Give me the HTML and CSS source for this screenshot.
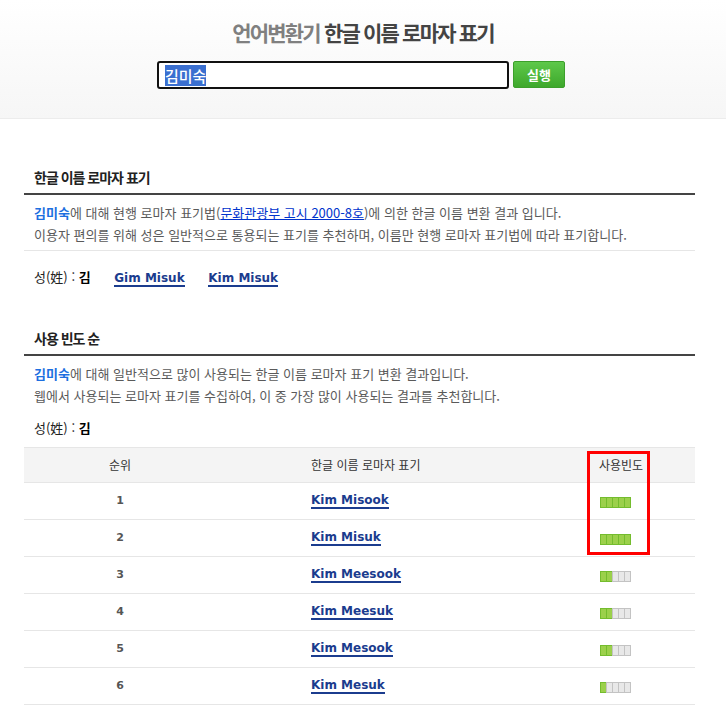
FILE: index.html
```html
<!DOCTYPE html>
<html lang="ko">
<head>
  <meta charset="UTF-8">
  <meta name="viewport" content="width=device-width, initial-scale=1.0">
  <title>한글 이름 로마자 표기</title>
  <link rel="stylesheet" href="styles.css">
  <script>
    // 검색어 선택 상태로 시작
    window.addEventListener('load', () => {
      const q = document.querySelector('#q');
      q.focus();
      q.select();
    });
  </script>
</head>
<body>
  <header class="top">
    <h1><span class="site">언어변환기</span> 한글 이름 로마자 표기</h1>
    <form class="search" onsubmit="return false">
      <input type="text" id="q" name="q" value="김미숙">
      <button type="submit">실행</button>
    </form>
  </header>

  <main class="content">
    <section class="section">
      <h2 class="section-title">한글 이름 로마자 표기</h2>
      <div class="desc desc-line">
        <p><strong class="name">김미숙</strong>에 대해 현행 로마자 표기법(<a href="#" class="law">문화관광부 고시 2000-8호</a>)에 의한 한글 이름 변환 결과 입니다.</p>
        <p>이용자 편의를 위해 성은 일반적으로 통용되는 표기를 추천하며, 이름만 현행 로마자 표기법에 따라 표기합니다.</p>
      </div>
      <p class="surname first">성(姓) : <b>김</b>
        <a href="#" class="roman">Gim Misuk</a>
        <a href="#" class="roman">Kim Misuk</a>
      </p>
    </section>

    <section class="section second">
      <h2 class="section-title">사용 빈도 순</h2>
      <div class="desc">
        <p><strong class="name">김미숙</strong>에 대해 일반적으로 많이 사용되는 한글 이름 로마자 표기 변환 결과입니다.</p>
        <p>웹에서 사용되는 로마자 표기를 수집하여, 이 중 가장 많이 사용되는 결과를 추천합니다.</p>
      </div>
      <p class="surname">성(姓) : <b>김</b></p>

      <div class="rank-wrap">
        <table class="rank">
          <thead>
            <tr>
              <th class="col-no">순위</th>
              <th class="col-name">한글 이름 로마자 표기</th>
              <th class="col-freq">사용빈도</th>
            </tr>
          </thead>
          <tbody>
            <tr>
              <td class="col-no">1</td>
              <td class="col-name"><a href="#" class="roman">Kim Misook</a></td>
              <td class="col-freq"><span class="bar"><i class="on"></i><i class="on"></i><i class="on"></i><i class="on"></i><i class="on"></i></span></td>
            </tr>
            <tr>
              <td class="col-no">2</td>
              <td class="col-name"><a href="#" class="roman">Kim Misuk</a></td>
              <td class="col-freq"><span class="bar"><i class="on"></i><i class="on"></i><i class="on"></i><i class="on"></i><i class="on"></i></span></td>
            </tr>
            <tr>
              <td class="col-no">3</td>
              <td class="col-name"><a href="#" class="roman">Kim Meesook</a></td>
              <td class="col-freq"><span class="bar"><i class="on"></i><i class="on"></i><i></i><i></i><i></i></span></td>
            </tr>
            <tr>
              <td class="col-no">4</td>
              <td class="col-name"><a href="#" class="roman">Kim Meesuk</a></td>
              <td class="col-freq"><span class="bar"><i class="on"></i><i class="on"></i><i></i><i></i><i></i></span></td>
            </tr>
            <tr>
              <td class="col-no">5</td>
              <td class="col-name"><a href="#" class="roman">Kim Mesook</a></td>
              <td class="col-freq"><span class="bar"><i class="on"></i><i class="on"></i><i></i><i></i><i></i></span></td>
            </tr>
            <tr>
              <td class="col-no">6</td>
              <td class="col-name"><a href="#" class="roman">Kim Mesuk</a></td>
              <td class="col-freq"><span class="bar"><i class="on"></i><i></i><i></i><i></i><i></i></span></td>
            </tr>
          </tbody>
        </table>
        <div class="mark"></div>
      </div>
    </section>
  </main>
</body>
</html>
```

FILE: styles.css
```css
html, body, h1, h2, p, form {
  padding: 0;
  margin: 0;
}

body {
  font-family: "Noto Sans CJK KR", "Noto Sans", sans-serif;
  font-size: 13px;
  color: #555;
  background: #fff;
}

/* 상단 검색 */
.top {
  height: 118px;
  background: linear-gradient(#fff, #f6f6f6);
  border-bottom: 1px solid #ececec;
  text-align: center;
}
.top h1 {
  padding-top: 19px;
  font-size: 21px;
  line-height: 26px;
  letter-spacing: -1.8px;
  color: #444;
}
.top h1 .site {
  color: #808080;
}
.search {
  display: flex;
  justify-content: center;
  gap: 4px;
  margin-top: 16px;
  padding-right: 4px;
}
.search input {
  box-sizing: border-box;
  width: 352px;
  height: 28px;
  padding: 0 6px;
  border: 2px solid #111;
  border-radius: 3px;
  outline: none;
  font-family: "Noto Sans CJK KR", sans-serif;
  font-size: 15px;
  font-weight: 500;
  color: #222;
  background: #fff;
}
.search input::selection {
  background: #3a6fd0;
  color: #fff;
}
.search button {
  box-sizing: border-box;
  width: 52px;
  height: 27px;
  border: 1px solid #3c9f2b;
  border-radius: 2px;
  background: linear-gradient(#5ec84a, #3ea82c);
  color: #fff;
  font-family: "Noto Sans CJK KR", sans-serif;
  font-size: 13px;
  font-weight: 700;
  cursor: pointer;
}

/* 본문 */
.content {
  width: 671px;
  margin-left: 24px;
}
.section {
  padding-top: 48px;
}
.section.second {
  padding-top: 40px;
}
.section-title {
  padding: 0 10px 6px;
  border-bottom: 2px solid #444;
  font-size: 14px;
  line-height: 20px;
  letter-spacing: -1px;
  color: #222;
}
.desc {
  padding: 7px 10px 0;
  line-height: 22px;
  color: #5a5a5a;
}
.desc-line {
  padding-bottom: 4px;
  border-bottom: 1px solid #e6e6e6;
}
.desc .name {
  color: #1d6fe0;
}
.desc .law {
  color: #0033cc;
}

.surname {
  margin-top: 11px;
  padding-left: 10px;
  line-height: 20px;
  color: #222;
}
.surname.first {
  margin-top: 16px;
}
.surname b {
  color: #000;
  margin-right: 20px;
}
.surname .roman {
  margin-right: 20px;
}

.roman {
  font-family: "DejaVu Sans", "Liberation Sans", sans-serif;
  font-size: 12px;
  font-weight: 700;
  color: #1b3c8e;
  text-decoration: none;
  border-bottom: 2px solid #1b3c8e;
}

/* 사용 빈도 표 */
.rank-wrap {
  position: relative;
  margin-top: 9px;
}
.rank {
  width: 100%;
  border-collapse: collapse;
  border-top: 1px solid #e6e6e6;
  font-size: 12px;
}
.rank th,
.rank td {
  padding-top: 0;
  padding-bottom: 0;
  line-height: 20px;
}
.rank th {
  height: 34px;
  background: #f4f4f4;
  font-weight: 400;
  color: #333;
  border-bottom: 1px solid #e6e6e6;
}
.rank td {
  height: 36px;
  border-bottom: 1px solid #e6e6e6;
}
.rank td.col-name {
  height: 33px;
  padding-bottom: 3px;
}
.rank .col-no {
  width: 190px;
  text-align: center;
}
.rank td.col-no {
  font-family: "DejaVu Sans", sans-serif;
  font-size: 11px;
  font-weight: 700;
  color: #555;
}
.rank .col-name {
  width: 235px;
  padding-left: 95px;
  text-align: left;
}
.rank .col-freq {
  text-align: center;
}
.rank td.col-freq {
  padding-right: 12px;
}

.bar {
  display: inline-flex;
  vertical-align: middle;
  padding-left: 1px;
}
.bar i {
  box-sizing: border-box;
  width: 7px;
  height: 11px;
  margin-left: -1px;
  border: 1px solid #c3c3c3;
  background: #e8e8e8;
}
.bar i.on {
  border-color: #74bc2e;
  background: #9bd04b;
}

/* 강조 표시 */
.mark {
  position: absolute;
  left: 563px;
  top: 4px;
  width: 63px;
  height: 104px;
  box-sizing: border-box;
  border: 3px solid #f00;
}
```
